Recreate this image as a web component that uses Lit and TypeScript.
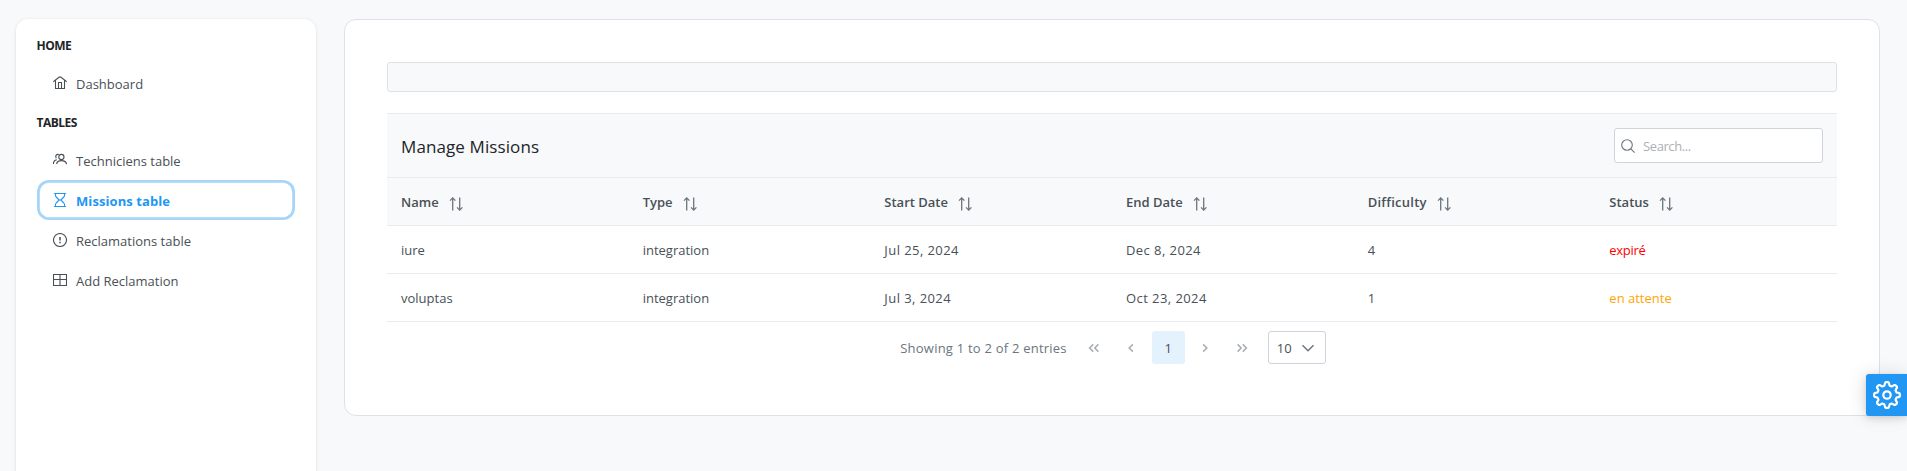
import { LitElement, html, svg, css } from "lit";
import { customElement } from "lit/decorators.js";

const icon = (body: unknown, size = 14, box = "0 0 14 14", cls = "") =>
  html`<svg class=${cls} width=${size} height=${size} viewBox=${box} aria-hidden="true">${body}</svg>`;

const I = {
  home: svg`<path d="M.3 5.700 6 1.300Q7 .5 8 1.300L13.700 5.700M2.500 4.500V12.500H11.500V4.500M5.500 12.500V6.500H8.500V12.500"/>`,
  users: svg`<circle cx="8.400" cy="4" r="2.600"/><path d="M3.700 11V10.500Q4.500 7.600 8.500 7.600T13.400 10.500V11.200M5.800 1.500C3.500 .8 2 2.800 3.300 5.200M3.800 6.800Q1.200 7 .5 9.500V11"/>`,
  hourglass: svg`<path d="M1 .5H13M1 13.500H13M2.500 .5V2.500Q2.500 3.200 3.200 4L6.200 7 3.200 10Q2.500 10.800 2.500 11.500V13.500M11.500 .5V2.500Q11.500 3.200 10.800 4L7.800 7 10.800 10Q11.500 10.800 11.500 11.500V13.500M6.200 7H7.800"/>`,
  alert: svg`<circle cx="7" cy="7" r="6.500"/><path stroke-width="1.500" d="M7 4V7.600M7 8.800V10.200"/>`,
  table: svg`<path d="M.5 1.500H13.500V12.500H.5ZM.5 6.500H13.500M7 1.500V12.500" />`,
  search: svg`<circle cx="6" cy="6" r="5.300"/><path d="M9.800 9.800 13.600 13.600"/>`,
  sort: svg`<path d="M3.700 13.500V1M1 3.600 3.700.9 6.400 3.600M10.700 .5V13M8 10.400l2.700 2.700 2.700-2.700"/>`,
  left: svg`<path d="M8.800 3.400 5.200 7l3.600 3.600"/>`,
  right: svg`<path d="M5.200 3.400 8.800 7l-3.600 3.600"/>`,
  lefts: svg`<path d="M6.200 3.400 2.600 7l3.600 3.600M11.400 3.400 7.800 7l3.600 3.600"/>`,
  rights: svg`<path d="M2.600 3.400 6.200 7l-3.600 3.600M7.800 3.400 11.400 7l-3.600 3.600"/>`,
  down: svg`<path d="M1.500 4.200 7 9.700l5.500-5.500"/>`,
};

// Eight-toothed cog outline with rounded lobes and notches.
const cog = (() => {
  let d = "";
  for (let i = 0; i <= 160; i++) {
    const a = (i / 160) * Math.PI * 2;
    const wave = Math.cos(a * 8);
    const r = 11.300 + 1.700 * Math.tanh(2 * wave);
    d += `${i ? "L" : "M"}${(14 + r * Math.sin(a)).toFixed(2)} ${(14 - r * Math.cos(a)).toFixed(2)}`;
  }
  return svg`<path d=${d + "Z"}/><circle cx="14" cy="14" r="3.700"/>`;
})();

const groups = [
  { label: "HOME", items: [{ text: "Dashboard", icon: I.home }] },
  {
    label: "TABLES",
    items: [
      { text: "Techniciens table", icon: I.users },
      { text: "Missions table", icon: I.hourglass, active: true },
      { text: "Reclamations table", icon: I.alert },
      { text: "Add Reclamation", icon: I.table },
    ],
  },
];
const columns = ["Name", "Type", "Start Date", "End Date", "Difficulty", "Status"];
const rows = [
  ["iure", "integration", "Jul 25, 2024", "Dec 8, 2024", "4", "expiré"],
  ["voluptas", "integration", "Jul 3, 2024", "Oct 23, 2024", "1", "en attente"],
];
const cellClass = (text: string, i: number) =>
  i === 5 ? (text === "expiré" ? "cell expired" : "cell pending") : i === 2 || i === 3 ? "cell date" : "cell";

@customElement("app-root")
export class AppRoot extends LitElement {
  static styles = css`
    :host { display: block; height: 471px; overflow: hidden; position: relative; background: #f8f9fa;
      font: 13px/21px "Open Sans", "Noto Sans", sans-serif; color: #495057; }
    * { box-sizing: border-box; }
    svg { fill: none; stroke: currentColor; stroke-width: 1.100; flex: none; display: block; }
    .layout { display: flex; align-items: flex-start; padding: 19px 27px 0 16px; gap: 28px; height: 100%; }
    .side { width: 300px; height: 480px; flex: none; background: #fff; border-radius: 12px; padding: 7px 21px;
      box-shadow: 0 3px 5px rgba(0,0,0,.02), 0 0 2px rgba(0,0,0,.05), 0 1px 4px rgba(0,0,0,.08); }
    .cap { font-weight: 700; font-size: 12px; color: #212529; height: 37px; line-height: 40px; letter-spacing: -.5px; margin-left: -.5px; }
    .item { display: flex; align-items: center; height: 40px; padding: 0 16px; gap: 9px; border-radius: 12px; }
    .item span { padding-top: 2px; }
    .active { color: #2196f3; font-weight: 700; letter-spacing: .08px; box-shadow: inset 0 0 0 2.800px #a6d5fa; }
    .card { flex: 1; height: 397px; background: #fff; border: 1px solid #dee2e6; border-radius: 12px; padding: 42px; }
    .toolbar { height: 30px; background: #f8f9fa; border: 1px solid #dee2e6; border-radius: 3px; margin-bottom: 21px; }
    .head { height: 65px; background: #f8f9fa; border: solid #e9ecef; border-width: 1px 0; padding: 0 14px;
      display: flex; align-items: center; justify-content: space-between; }
    .title { font-size: 17px; letter-spacing: .1px; color: #212529; font-weight: 400; padding-top: 2px; }
    .search { width: 209px; height: 35px; background: #fff; border: 1px solid #ced4da; border-radius: 3px;
      display: flex; align-items: center; gap: 8px; padding-left: 6px; color: #6c757d; }
    .ph { color: #adb0b4; letter-spacing: -.4px; padding-top: 2px; }
    .row { display: grid; grid-template-columns: repeat(6, 1fr); height: 48px; align-items: center; border-bottom: 1px solid #e9ecef; }
    .labels { background: #f8f9fa; }
    .cell { padding: 2px 0 0 14px; }
    .th { display: flex; align-items: center; gap: 10px; font-weight: 600; }
    .th:nth-child(5) span { letter-spacing: .25px; }
    .sort { margin-top: 3px; color: #6c757d; stroke-width: 1.300; }
    .date { letter-spacing: .43px; }
    .expired { color: red; letter-spacing: -.3px; }
    .pending { color: orange; }
    .pager { display: flex; align-items: center; justify-content: center; height: 51px; color: #6c757d; padding-left: 2px; }
    .info { letter-spacing: .22px; margin-right: 9px; padding-top: 1px; }
    .pg { width: 33px; height: 33px; margin: 0 2px; display: flex; align-items: center; justify-content: center; border-radius: 3px; }
    .dim { color: #a7acb1; }
    .dim svg { stroke-width: 1.500; }
    .current { background: #e3f2fd; color: #495057; padding-top: 1px; }
    .size { width: 58px; height: 33px; border: 1px solid #ced4da; border-radius: 3px; margin-left: 7px;
      display: flex; align-items: center; gap: 9px; padding: 2px 0 0 8px; color: #495057; }
    .size svg { stroke-width: 1.500; color: #6c757d; margin-top: -2px; }
    .config { position: absolute; right: 0; top: 374px; width: 41px; height: 42px; background: #2196f3; color: #fff;
      border-radius: 3px 0 0 3px; display: flex; align-items: center; justify-content: center;
      box-shadow: 0 4px 10px rgba(0,0,0,.03), 0 0 2px rgba(0,0,0,.06), 0 2px 6px rgba(0,0,0,.08), -2px 0 18px rgba(0,0,0,.12); }
    .config svg { stroke-width: 2.200; }
  `;

  render() {
    return html`
      <div class="layout">
        <nav class="side">
          ${groups.map((g) => html`
            <div class="cap">${g.label}</div>
            ${g.items.map((m: any) => html`<div class="item ${m.active ? "active" : ""}">${icon(m.icon)}<span>${m.text}</span></div>`)}
          `)}
        </nav>
        <main class="card">
          <div class="toolbar"></div>
          <div class="head">
            <span class="title">Manage Missions</span>
            <div class="search">${icon(I.search)}<span class="ph">Search...</span></div>
          </div>
          <div class="row labels">
            ${columns.map((c) => html`<div class="cell th"><span>${c}</span>${icon(I.sort, 14, "0 0 14 14", "sort")}</div>`)}
          </div>
          ${rows.map((r) => html`<div class="row">${r.map((t, i) => html`<div class=${cellClass(t, i)}>${t}</div>`)}</div>`)}
          <div class="pager">
            <span class="info">Showing 1 to 2 of 2 entries</span>
            <span class="pg dim">${icon(I.lefts)}</span>
            <span class="pg dim">${icon(I.left)}</span>
            <span class="pg current">1</span>
            <span class="pg dim">${icon(I.right)}</span>
            <span class="pg dim">${icon(I.rights)}</span>
            <div class="size"><span>10</span>${icon(I.down)}</div>
          </div>
        </main>
      </div>
      <div class="config">${icon(cog, 28, "0 0 28 28")}</div>
    `;
  }
}
